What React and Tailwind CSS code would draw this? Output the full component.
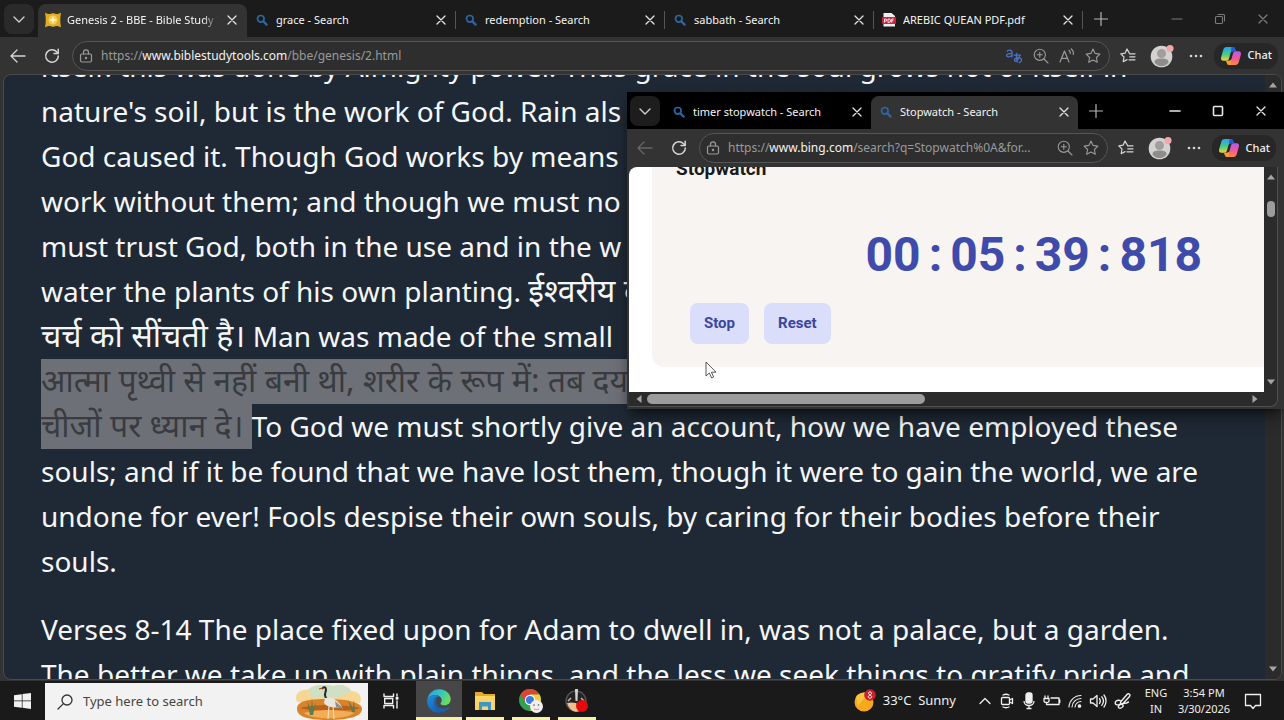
import React, { useState } from 'react';
import clsx from 'clsx';

const mainTabs = [
  { title: 'Genesis 2 - BBE - Bible Study To', icon: 'book' },
  { title: 'grace - Search', icon: 'search' },
  { title: 'redemption - Search', icon: 'search' },
  { title: 'sabbath - Search', icon: 'search' },
  { title: 'AREBIC QUEAN PDF.pdf', icon: 'pdf' },
];

const popupTabs = [
  { title: 'timer stopwatch - Search', icon: 'search' },
  { title: 'Stopwatch - Search', icon: 'search' },
];

// Thin line icons share one wrapper
function Line({ size = 16, box = 16, width = 1.2, className, children }) {
  return (
    <svg
      width={size}
      height={size}
      viewBox={`0 0 ${box} ${box}`}
      fill="none"
      stroke="currentColor"
      strokeWidth={width}
      strokeLinecap="round"
      strokeLinejoin="round"
      className={clsx('shrink-0', className)}
      aria-hidden="true"
    >
      {children}
    </svg>
  );
}

const CloseIcon = () => (
  <Line size={10} box={10} width={1.3}>
    <path d="M1 1l8 8M9 1l-8 8" />
  </Line>
);

const ChevronIcon = () => (
  <Line size={14} box={14} width={1.4}>
    <path d="M2 5l5 5 5-5" />
  </Line>
);

const PlusIcon = () => (
  <Line size={14} box={14} width={1.2}>
    <path d="M7 .5v13M.5 7h13" />
  </Line>
);

const BackIcon = () => (
  <Line size={16} width={1.3}>
    <path d="M15 8H1M7 2L1 8l6 6" />
  </Line>
);

const ReloadIcon = () => (
  <Line size={16} width={1.5}>
    <path d="M14.3 8A6.3 6.3 0 1 1 12.6 3.7L14 5.2" />
    <path d="M14.2 1.2v4.2H10" />
  </Line>
);

const LockIcon = () => (
  <Line size={14} box={14} width={1.2}>
    <rect x="1.5" y="5" width="11" height="8" rx="1.5" />
    <path d="M4.5 5V3.4a2.5 2.5 0 0 1 5 0V5" />
    <circle cx="7" cy="9" r=".6" fill="currentColor" />
  </Line>
);

const ZoomIcon = () => (
  <Line size={16} width={1.1}>
    <circle cx="6.8" cy="6.8" r="5.6" />
    <path d="M11 11l4 4M4.3 6.8h5M6.8 4.3v5" />
  </Line>
);

const StarIcon = () => (
  <Line size={16} width={1.1}>
    <path d="M8 1l2.1 4.4 4.8.7-3.5 3.4.9 4.8L8 12l-4.3 2.3.9-4.8L1.1 6.1l4.8-.7z" />
  </Line>
);

const FavoritesIcon = () => (
  <Line size={16} width={1.2}>
    <path d="M9.2 4.9L7 1 5.1 5.2.8 5.8 4 9l-.8 4.7L7 11.6M9.5 5.8H15M9.8 8.8H15M9 11.8h6" />
  </Line>
);

const DotsIcon = () => (
  <svg width="14" height="4" viewBox="0 0 14 4" fill="currentColor" aria-hidden="true">
    <circle cx="2" cy="2" r="1.3" />
    <circle cx="7" cy="2" r="1.3" />
    <circle cx="12" cy="2" r="1.3" />
  </svg>
);

const TranslateIcon = () => (
  <Line size={18} box={18} width={1.3} className="text-[#4a72c4]">
    <path d="M2.2 4.2C3 2.6 7 2.4 7 5.2V10M7 6.400C3.800 6.300 1.600 6.800 1.600 8.400c0 2 4 2 5.400-.4" />
    <path d="M9 8.200h6.500M11.600 6.300c-.3 3 0 6 .8 8.700M14.300 9.500c-.8 3.500-4.800 6.500-4.800 3.500 0-2.600 7-3.600 7 0 0 1.500-.9 2.300-2.200 2.700" />
  </Line>
);

const ReadAloudIcon = () => (
  <Line size={16} width={1.2}>
    <path d="M1 14L5.500 3 10 14M2.600 10.300h5.800M10 2.200c1 .9 1.400 2 1.300 3.300M12.300 1c1.600 1.300 2.300 3.200 2 5.300" />
  </Line>
);

function Favicon({ icon }) {
  if (icon === 'book') {
    return (
      <svg width="16" height="16" viewBox="0 0 16 16" aria-hidden="true">
        <path d="M0 .5c3 2 5 2 8 .5 3 1.500 5 1.500 8-.5-1 5-1 10 0 15-3-2-5-2-8-.5-3-1.500-5-1.500-8 .5 1-5 1-10 0-15z" fill="#e2ae1f" />
        <circle cx="8" cy="8" r="4.500" fill="#f3cd55" />
        <path d="M8 4l1 3 3 1-3 1-1 3-1-3-3-1 3-1z" fill="#fff6d8" />
      </svg>
    );
  }
  if (icon === 'pdf') {
    return (
      <svg width="16" height="16" viewBox="0 0 16 16" aria-hidden="true">
        <path d="M2.500 1h8L14 4v10.500h-11.500z" fill="#f3eeee" />
        <rect x="1" y="5" width="14" height="7" rx="1" fill="#cf2440" />
        <path d="M3.500 10.500V7h1.200a1 1 0 0 1 0 2H3.500M7 7v3.500h.8a1.700 1.700 0 0 0 0-3.500zM12.700 7h-2v3.500M10.700 8.700h1.500" fill="none" stroke="#fff" strokeWidth=".9" />
      </svg>
    );
  }
  return (
    <svg width="12" height="12" viewBox="0 0 12 12" fill="none" stroke="#2c67a5" aria-hidden="true">
      <circle cx="4.800" cy="4.800" r="3.300" strokeWidth="1.700" />
      <path d="M7.400 7.400l3.200 3.200" strokeWidth="2.200" strokeLinecap="round" />
    </svg>
  );
}

function CopilotIcon({ id }) {
  return (
    <svg width="22" height="20" viewBox="0 0 22 20" aria-hidden="true">
      <defs>
        <linearGradient id={`${id}-a`} x1="0" y1="0" x2="0" y2="1">
          <stop offset="0" stopColor="#2fa0f5" />
          <stop offset=".5" stopColor="#3ecb8c" />
          <stop offset="1" stopColor="#f0d536" />
        </linearGradient>
        <linearGradient id={`${id}-b`} x1="0" y1="0" x2="0" y2="1">
          <stop offset="0" stopColor="#b05df0" />
          <stop offset=".5" stopColor="#f0559c" />
          <stop offset="1" stopColor="#fb8b3c" />
        </linearGradient>
      </defs>
      <path d="M6.500 1h6c1.500 0 2.200.8 2.700 2.200l.6 2H13c-1.500 0-2.200.8-2.600 2.200L9 12.500c-.5 1.600-1.300 2.300-2.800 2.300H3.500C1.300 14.800.6 13.200 1.200 11l2-7C3.800 2 4.800 1 6.500 1z" fill={`url(#${id}-a)`} />
      <path d="M15.500 19h-6c-1.500 0-2.200-.8-2.700-2.200l-.6-2H9c1.500 0 2.200-.8 2.600-2.200L13 7.500c.5-1.600 1.300-2.300 2.800-2.300h2.700c2.200 0 2.900 1.600 2.300 3.800l-2 7c-.6 2-1.600 3-3.300 3z" fill={`url(#${id}-b)`} />
      <path d="M11.500 1h1c1.500 0 2.200.8 2.700 2.200l.6 2H13c-1 0-1.700.4-2.100 1.200z" fill="#2459d8" />
      <path d="M6.200 14.800l.6 2C7.300 18.200 8 19 9.500 19h1l.8-5.500c-.5.900-1.200 1.300-2.300 1.300z" fill="#f5a02e" />
    </svg>
  );
}

function Avatar() {
  return (
    <svg width="24" height="24" viewBox="0 0 24 24" aria-hidden="true">
      <circle cx="11.500" cy="12.500" r="10.800" fill="#d4d2d0" />
      <circle cx="11.500" cy="9.500" r="4.500" fill="#a19f9d" />
      <path d="M4.500 18.500c0-3 2-4 7-4s7 1 7 4c-2 2.600-4.300 3.600-7 3.600s-5-1-7-3.600z" fill="#8f8d8b" />
      <circle cx="20" cy="4.500" r="3.600" fill="#efa9ab" />
    </svg>
  );
}

function Tab({ tab, active, divider, popup, onSelect }) {
  return (
    <div
      role="tab"
      aria-selected={active}
      onClick={onSelect}
      className={clsx(
        'flex h-[33px] min-w-0 items-center gap-1.5 self-end pb-0.5 pl-[7px]',
        popup ? 'w-[207px] pr-1.5' : 'w-[209px] pr-[7px]',
        active && 'rounded-t-lg bg-[#333333]'
      )}
    >
      <span className="flex w-4 shrink-0 items-center justify-center">
        <Favicon icon={tab.icon} />
      </span>
      <span
        className={clsx(
          'min-w-0 flex-1 overflow-hidden text-[11px] leading-4 whitespace-nowrap text-[#f4f4f4]',
          active && !popup && 'mask-r-from-90%'
        )}
      >
        {tab.title}
      </span>
      <button aria-label={`Close ${tab.title}`} className="flex size-4 shrink-0 items-center justify-center text-[#e4e4e4]">
        <CloseIcon />
      </button>
      {divider && <span className="-mr-[7px] h-[18px] w-px bg-[#555555]" />}
    </div>
  );
}

function TabBar({ tabs, initial, popup }) {
  const [current, setCurrent] = useState(initial);

  return (
    <div className={clsx('flex h-[37px] items-center', popup ? 'bg-black pl-[3px]' : 'bg-[#1b1b1b] pl-1')}>
      <button
        aria-label="Tab actions"
        className={clsx('mr-1 flex size-[30px] shrink-0 items-center justify-center rounded-lg text-[#d0d0d0]', popup ? 'bg-[#1d1d1d]' : 'bg-[#2a2a2a]')}
      >
        <ChevronIcon />
      </button>
      <div role="tablist" className="flex min-w-0 self-stretch">
        {tabs.map((tab, i) => (
          <Tab
            key={tab.title}
            tab={tab}
            active={i === current}
            divider={!popup && i !== current}
            popup={popup}
            onSelect={() => setCurrent(i)}
          />
        ))}
      </div>
      <button aria-label="New tab" className="flex w-9 shrink-0 items-center justify-center text-[#b5b5b5]">
        <PlusIcon />
      </button>
      <div className={clsx('ml-auto flex shrink-0', popup ? 'pr-0.5 text-[#e8e8e8]' : 'text-[#7a7a7a]')}>
        <button aria-label="Minimize" className="flex h-8 w-[43px] items-center justify-center">
          <Line size={12} box={12} width={popup ? 1.6 : 1}>
            <path d="M1 6h10" />
          </Line>
        </button>
        <button aria-label={popup ? 'Maximize' : 'Restore'} className="flex h-8 w-[43px] items-center justify-center">
          <Line size={12} box={12} width={popup ? 1.6 : 1.1}>
            {popup ? (
              <rect x="1.500" y="1.500" width="9" height="9" rx="1" />
            ) : (
              <>
                <rect x="1.500" y="3.500" width="7" height="7" rx="1" />
                <path d="M4 1.500h5.500a1 1 0 0 1 1 1V8" />
              </>
            )}
          </Line>
        </button>
        <button aria-label="Close window" className="flex h-8 w-[43px] items-center justify-center">
          <CloseIcon />
        </button>
      </div>
    </div>
  );
}

function IconButton({ label, className, children }) {
  return (
    <button aria-label={label} className={clsx('flex h-7 shrink-0 items-center justify-center', className)}>
      {children}
    </button>
  );
}

function Toolbar({ host, path, popup }) {
  return (
    <div className={clsx('flex items-center bg-[#333333] text-[#d6d6d6]', popup ? 'h-[38px] pr-2' : 'h-[37px] pr-1.5')}>
      <IconButton label="Back" className={clsx('w-9', popup && 'text-[#666666]')}>
        <BackIcon />
      </IconButton>
      <IconButton label="Refresh" className="mr-1 w-8">
        <ReloadIcon />
      </IconButton>
      <div className="flex h-[30px] min-w-0 flex-1 items-center rounded-full border border-[#555555] bg-[#2e2e2e] pr-2 pl-1.5 text-[#9a9a9a]">
        <LockIcon />
        <div
          role="textbox"
          aria-label="Address"
          contentEditable
          suppressContentEditableWarning
          className="mx-2 min-w-0 flex-1 overflow-hidden text-xs leading-5 whitespace-nowrap outline-none"
        >
          https://<span className="text-[#f2f2f2]">{host}</span>{path}
        </div>
        <div className="flex items-center gap-[10px]">
          {!popup && <button aria-label="Translate"><TranslateIcon /></button>}
          <button aria-label="Zoom"><ZoomIcon /></button>
          {!popup && <button aria-label="Read aloud"><ReadAloudIcon /></button>}
          <button aria-label="Add to favorites"><StarIcon /></button>
        </div>
      </div>
      <IconButton label="Favorites" className="w-9">
        <FavoritesIcon />
      </IconButton>
      <IconButton label="Profile" className="w-8">
        <Avatar />
      </IconButton>
      <IconButton label="Settings and more" className="w-9">
        <DotsIcon />
      </IconButton>
      <button className="flex h-[26px] shrink-0 items-center gap-1.5 rounded-xl bg-[#272727] px-1.5 text-[11px] font-medium text-[#f0f0f0]">
        <CopilotIcon id={popup ? 'copilot-popup' : 'copilot-main'} />
        Chat
      </button>
    </div>
  );
}

const ArrowHead = ({ d }) => (
  <svg width="8" height="8" viewBox="0 0 8 8" fill="#a5a5a5" className="shrink-0" aria-hidden="true">
    <path d={d} />
  </svg>
);

const UP = 'M4 1.500L8 6.500H0z';
const DOWN = 'M4 6.500L8 1.500H0z';
const LEFT = 'M1.500 4L6.500 0v8z';
const RIGHT = 'M6.500 4L1.500 0v8z';

const Hindi = ({ children }) => (
  <span lang="hi" className="text-[32px] leading-none">{children}</span>
);

const Selected = ({ className, children }) => (
  <mark lang="hi" className={clsx('inline-block h-[45px] bg-[#6d7076] align-top text-[32px] leading-[42px] text-[#393b40]', className)}>
    {children}
  </mark>
);

function Article() {
  return (
    <article className="-mt-[31px] min-w-0 flex-1 overflow-hidden pl-[37px] text-[28px] leading-[45px] whitespace-nowrap text-[#f4f6f8]">
      <p className="mb-[23px]">
        itself: this was done by Almighty power. Thus grace in the soul grows not of itself in<br />
        nature's soil, but is the work of God. Rain als<br />
        God caused it. Though God works by means<br />
        work without them; and though we must no<br />
        must trust God, both in the use and in the w<br />
        water the plants of his own planting. <Hindi>ईश्वरीय द</Hindi><br />
        <Hindi>चर्च को सींचती है।</Hindi> Man was made of the small<br />
        <Selected>आत्मा पृथ्वी से नहीं बनी थी, शरीर के रूप में: तब दया</Selected><br />
        <Selected className="pr-2">चीजों पर ध्यान दे।</Selected>
        To God we must shortly give an account, how we have employed these<br />
        souls; and if it be found that we have lost them, though it were to gain the world, we are<br />
        undone for ever! Fools despise their own souls, by caring for their bodies before their<br />
        souls.
      </p>
      <p>
        Verses 8-14 The place fixed upon for Adam to dwell in, was not a palace, but a garden.<br />
        The better we take up with plain things, and the less we seek things to gratify pride and
      </p>
    </article>
  );
}

function StopwatchWindow() {
  const [time] = useState(['00', '05', '39', '818']);

  return (
    <section aria-label="Stopwatch window" className="absolute top-[92px] right-0 w-[657px] bg-[#333333] pb-0.5 shadow-lg shadow-black/50">
      <TabBar tabs={popupTabs} initial={1} popup />
      <Toolbar host="www.bing.com" path="/search?q=Stopwatch%0A&for..." popup />
      <div className="mr-1.5 ml-0.5 overflow-hidden rounded-tl-lg rounded-br-lg border-r border-b border-[#505050] bg-[#2b2b2b]">
        <div className="flex">
          <div className="h-[225px] min-w-0 flex-1 overflow-hidden bg-white pl-[23px]">
            <div className="-mt-3 h-[212px] rounded-bl-xl bg-[#f7f4f1] pl-6 font-['Roboto',sans-serif]">
              <h2 className="pt-0.5 text-[19px] leading-6 font-bold text-[#1a1a1a]">Stopwatch</h2>
              <div className="mt-[50px] flex justify-end gap-2 pr-[62px] text-5xl leading-[48px] font-bold text-[#3f4bab]">
                {time.map((part, i) => (
                  <React.Fragment key={part}>
                    {i > 0 && <span>:</span>}
                    <span>{part}</span>
                  </React.Fragment>
                ))}
              </div>
              <div className="mt-6 flex gap-[15px] pl-3.5 text-[15px] font-bold text-[#3c46a0]">
                <button className="h-[41px] rounded-lg bg-[#dadefb] px-3.5">Stop</button>
                <button className="h-[41px] rounded-lg bg-[#dadefb] px-3.5">Reset</button>
              </div>
            </div>
          </div>
          <div className="flex w-[13px] flex-col items-center py-1.5">
            <ArrowHead d={UP} />
            <span className="mt-5 h-4 w-2 rounded-full bg-[#9c9c9c]" />
            <span className="mt-auto"><ArrowHead d={DOWN} /></span>
          </div>
        </div>
        <div className="flex h-[14px] items-center pr-[18px] pl-1.5">
          <ArrowHead d={LEFT} />
          <span className="ml-1 h-2.5 w-[278px] rounded-full bg-[#9c9c9c]" />
          <span className="ml-auto"><ArrowHead d={RIGHT} /></span>
        </div>
      </div>
    </section>
  );
}

function Pointer() {
  return (
    <svg width="12" height="18" viewBox="0 0 12 18" className="absolute top-[361px] left-[705px]" aria-hidden="true">
      <path d="M1 1v14l3.300-3 2.400 5 2-1-2.300-4.800H11z" fill="#fff" stroke="#444" strokeWidth=".9" />
    </svg>
  );
}

const EdgeLogo = () => (
  <svg width="24" height="24" viewBox="0 0 24 24" aria-hidden="true">
    <defs>
      <linearGradient id="edge-top" x1="0" y1="0" x2="1" y2=".4">
        <stop offset="0" stopColor="#2b9be8" />
        <stop offset=".6" stopColor="#36c6c0" />
        <stop offset="1" stopColor="#6bdc5c" />
      </linearGradient>
      <linearGradient id="edge-low" x1="0" y1="0" x2="1" y2="1">
        <stop offset="0" stopColor="#1f8fe0" />
        <stop offset="1" stopColor="#14509c" />
      </linearGradient>
    </defs>
    <path d="M.3 11C1.200 4.500 6 .3 12 .3c6.800 0 11.700 4.700 11.700 10 0 3.800-2.900 6-6 6-2.700 0-4.200-1-4.200-1.900 0-.6 1.200-1.200 1.200-3.200C14.700 8 11.500 6 8 6 4.500 6 1.500 7.800.3 11z" fill="url(#edge-top)" />
    <path d="M.3 11C1.500 7.800 4.500 6 8 6c1.500 0 3 .5 4 1.200-3 .5-4.800 3-4.800 6 0 5 4.200 8.300 9 8.300 1.800 0 3-.5 4.300-1.200C18.500 22.600 15.500 23.800 12 23.800 5 23.800-.6 18 .3 11z" fill="url(#edge-low)" />
    <path d="M9.500 11.500c-1.600 3.800 1.500 8.200 6.500 8.300 2.700 0 4.700-1 6-2 .5-.3.900 0 .5.800-1 1.500-2.500 2.600-4 3.400-6.500 1.500-11.800-2.600-11.300-8.600.2-1.900 1-3.400 2.300-4.400z" fill="#1a61b5" />
  </svg>
);

const FolderLogo = () => (
  <svg width="22" height="20" viewBox="0 0 22 20" aria-hidden="true">
    <path d="M1 1h7l2 2h11v5H1z" fill="#e9a928" />
    <path d="M1 5h20v14H1z" fill="#fbd466" />
    <path d="M5 19v-8h12v8h-3v-3.500H8V19z" fill="#3d97c9" />
  </svg>
);

const ChromeLogo = () => (
  <svg width="26" height="26" viewBox="0 0 26 26" aria-hidden="true">
    <circle cx="12" cy="12" r="11" fill="#2fa24f" />
    <path d="M2.500 6.500A11 11 0 0 1 21.500 6.500H12L7.500 14.500z" fill="#dd4437" />
    <path d="M12 6.500h9.500A11 11 0 0 1 12 23l4.800-8.500z" fill="#f8cc3b" />
    <circle cx="12" cy="12" r="5.200" fill="#fff" />
    <circle cx="12" cy="12" r="4" fill="#3c7be0" />
    <circle cx="18.500" cy="18.500" r="6.500" fill="#f0eeee" />
    <circle cx="16" cy="17" r=".8" fill="#555" />
    <circle cx="20.500" cy="17" r=".8" fill="#555" />
    <path d="M16 21c1.500.8 3.500.8 5 0" stroke="#d48aa0" fill="none" />
  </svg>
);

const RecorderLogo = () => (
  <svg width="26" height="26" viewBox="0 0 26 26" aria-hidden="true">
    <circle cx="12" cy="13" r="10" fill="#222" stroke="#505050" strokeWidth="1.500" />
    <path d="M3 15c3-1 6-.5 9 0l6 7c-4 3-12 3-15-7z" fill="#f1bd8d" />
    <path d="M4 13l3-3M20 13l-3-3" stroke="#bbb" strokeWidth="1.500" />
    <path d="M11 1h3l-.5 12h-2z" fill="#d3d3d3" />
    <circle cx="18" cy="18" r="6" fill="#e40b0b" />
  </svg>
);

const CraneScene = () => (
  <svg width="70" height="36" viewBox="0 0 70 36" className="shrink-0" aria-hidden="true">
    <path d="M3 18C-1 9 8 5 14 6 20-1 34 1 40 2c8-3 16 2 17 5 7 0 12 5 9 12z" fill="#f5d793" />
    <path d="M14 6C20-1 34 1 40 2c8-3 16 2 17 5l-12 6H18z" fill="#cfe0c4" />
    <path d="M3 25c0-8 10-10 31-10s34 4 34 10c0 7-12 11-34 11S3 32 3 25z" fill="#d9842c" />
    <path d="M6 24c14-4 44-4 60 0-8 4-48 4-60 0z" fill="#b8601c" />
    <path d="M10 29c12-4 38-4 50 0-8 7-42 7-50 0z" fill="#f2ad55" />
    <path d="M16 31l-3-14 4 8 1-11 1 11 3-7-3 13M58 28l-4-12 5 8 1-8 1 12" fill="#5b7d4b" />
    <path d="M28 5c2-3 4-2 4 1-1 4-2 6 1 9" fill="none" stroke="#232628" strokeWidth="2" />
    <path d="M25 5l4-1" stroke="#b0451f" strokeWidth="1.200" />
    <path d="M31 14c6-2 12 1 17 9-7 1-14 1-18-4z" fill="#e8e6e1" />
    <path d="M41 17l9 8-8-2z" fill="#8c8f91" />
    <path d="M35 22l-1 13M39 22l1 13" stroke="#f5dcb6" strokeWidth="1.200" />
  </svg>
);

const taskbarApps = [
  { name: 'Microsoft Edge', logo: <EdgeLogo />, active: true },
  { name: 'File Explorer', logo: <FolderLogo /> },
  { name: 'Google Chrome', logo: <ChromeLogo /> },
  { name: 'Recorder', logo: <RecorderLogo /> },
];

function Taskbar() {
  return (
    <footer className="flex h-10 shrink-0 items-center border-t border-[#333333] bg-[#1a1a1a] text-[#f0f0f0]">
      <button aria-label="Start" className="flex w-[45px] shrink-0 justify-center">
        <svg width="17" height="16" viewBox="0 0 17 16" fill="#f2f2f2" aria-hidden="true">
          <path d="M0 2.300L7.800 1.200v6.400H0zM8.500 1L17 0v7.600H8.500zM0 8.300h7.800v6.500L0 13.700zM8.500 8.300H17V16l-8.500-1.200z" />
        </svg>
      </button>
      <label className="flex h-[37px] w-[323px] min-w-0 items-center self-end bg-[#f2f2f2] pr-1 pl-3 text-[#333333]">
        <Line size={16} width={1.3}>
          <circle cx="10" cy="6" r="5" />
          <path d="M6.400 9.600L1 15" />
        </Line>
        <input
          type="text"
          aria-label="Search"
          placeholder="Type here to search"
          className="ml-2.5 min-w-0 flex-1 bg-transparent text-[13px] outline-none placeholder:text-[#444444]"
        />
        <CraneScene />
      </label>
      <button aria-label="Task view" className="mr-0.5 flex w-[46px] shrink-0 justify-center">
        <Line size={16} width={1.4}>
          <path d="M1 1v2.500h9.500V1M1 15v-2.500h9.500V15M1.700 5.500h8v5h-8zM14 1v2M14 8v7" />
          <rect x="13.300" y="4.500" width="1.500" height="1.500" fill="currentColor" />
        </Line>
      </button>
      {taskbarApps.map((app) => (
        <button
          key={app.name}
          aria-label={app.name}
          className={clsx('flex h-full w-[46px] shrink-0 flex-col items-center', app.active && 'bg-[#474747]')}
        >
          <span className="flex flex-1 items-center pt-1">{app.logo}</span>
          <span className={clsx('h-[3px] bg-[#f7f3a6]', app.active ? 'w-full' : 'w-[38px]')} />
        </button>
      ))}
      <div className="ml-auto flex shrink-0 items-center">
        <button className="mr-[22px] flex items-center gap-[7px] text-[13px] whitespace-pre">
          <svg width="22" height="24" viewBox="0 0 22 24" aria-hidden="true">
            <circle cx="10" cy="13" r="9.500" fill="#f7a81c" />
            <path d="M2 8a9.500 9.500 0 0 1 12-3.500L4 17z" fill="#fbc441" />
            <circle cx="16" cy="6" r="5.800" fill="#c8202f" />
            <path d="M16 6c-2-.7-2-3 0-3s2 2.300 0 3c-2.300.8-2.300 3.200 0 3.200s2.300-2.400 0-3.200z" fill="none" stroke="#fff" />
          </svg>
          33°C  Sunny
        </button>
        <div className="flex items-center gap-[7px]">
          <Line size={14} box={14} width={1.3}><path d="M2 9.500L7 4.500l5 5" /></Line>
          <Line size={16} width={1.3}>
            <rect x="2.500" y="4.500" width="8" height="7" rx="1" />
            <path d="M10.500 7l3-1.500v5l-3-1.500M4 2c2-1 4-1 6 0M4 14c2 1 4 1 6 0" />
          </Line>
          <svg width="14" height="18" viewBox="0 0 14 18" fill="none" stroke="currentColor" strokeWidth="1.300" aria-hidden="true">
            <rect x="4" y="1" width="6" height="10" rx="2" fill="currentColor" />
            <path d="M2 9c0 6 10 6 10 0M7 13.500V17M4.500 16.500h5" />
          </svg>
          <Line size={18} box={18} width={1.3}>
            <path d="M8 6h8v6.500H6.500M16.800 8v2.500M2 4v2.500M5 4v2.500M1 6.500h5V9c0 1-1 1.500-2.500 1.500S1 10 1 9zM3.500 10.500v2h3" />
          </Line>
          <Line size={14} box={14} width={1.1}>
            <path d="M1 13A12 12 0 0 1 13 1.500M4 13A9 9 0 0 1 13 4.500M7 13a6 6 0 0 1 6-5.500" />
            <circle cx="11.500" cy="12" r="1.300" fill="currentColor" />
          </Line>
          <Line size={18} box={18} width={1.3}>
            <path d="M1.500 7v4H4l4 3.500v-11L4 7zM10.500 6.500c1 1.500 1 3.500 0 5M12.800 4.800c2 2.500 2 6 0 8.500M15 3c2.700 3.500 2.700 8.500 0 12" />
          </Line>
          <Line size={18} box={18} width={1.4}>
            <path d="M7 9.500l6-7c1.500-1.500 4 0 2.500 2l-6.500 7-3 1zM6 8.500c-3-1-5.500 1-4.500 3.500s6.500-1 7.500 1-3.500 4.500-4.500 2.500 3-4 8-4.500l2-1" />
          </Line>
        </div>
        <button className="ml-3 w-6 text-center text-[11px] leading-4">ENG IN</button>
        <button className="ml-2 w-[56px] text-center text-[11px] leading-4 whitespace-nowrap">
          3:54 PM<br />3/30/2026
        </button>
        <button aria-label="Notifications" className="mr-[22px] ml-3">
          <Line size={18} box={18} width={1.3}>
            <path d="M1.500 2.500h15v11h-5L9 16.500l-2.500-3h-5z" />
          </Line>
        </button>
      </div>
    </footer>
  );
}

export default function App() {
  return (
    <div className="relative flex h-screen flex-col overflow-hidden bg-[#333333] font-['Noto_Sans','Open_Sans',sans-serif]">
      <TabBar tabs={mainTabs} initial={0} />
      <Toolbar host="www.biblestudytools.com" path="/bbe/genesis/2.html" />
      <main className="mr-0.5 ml-[3px] flex min-h-0 flex-1 overflow-hidden rounded-lg border border-[#4a4a4a] bg-[#1f2935]">
        <Article />
        <div className="flex w-4 shrink-0 flex-col items-center justify-between bg-[#2b2b2b] py-1.5">
          <ArrowHead d={UP} />
          <ArrowHead d={DOWN} />
        </div>
      </main>
      <Taskbar />
      <StopwatchWindow />
      <Pointer />
    </div>
  );
}
